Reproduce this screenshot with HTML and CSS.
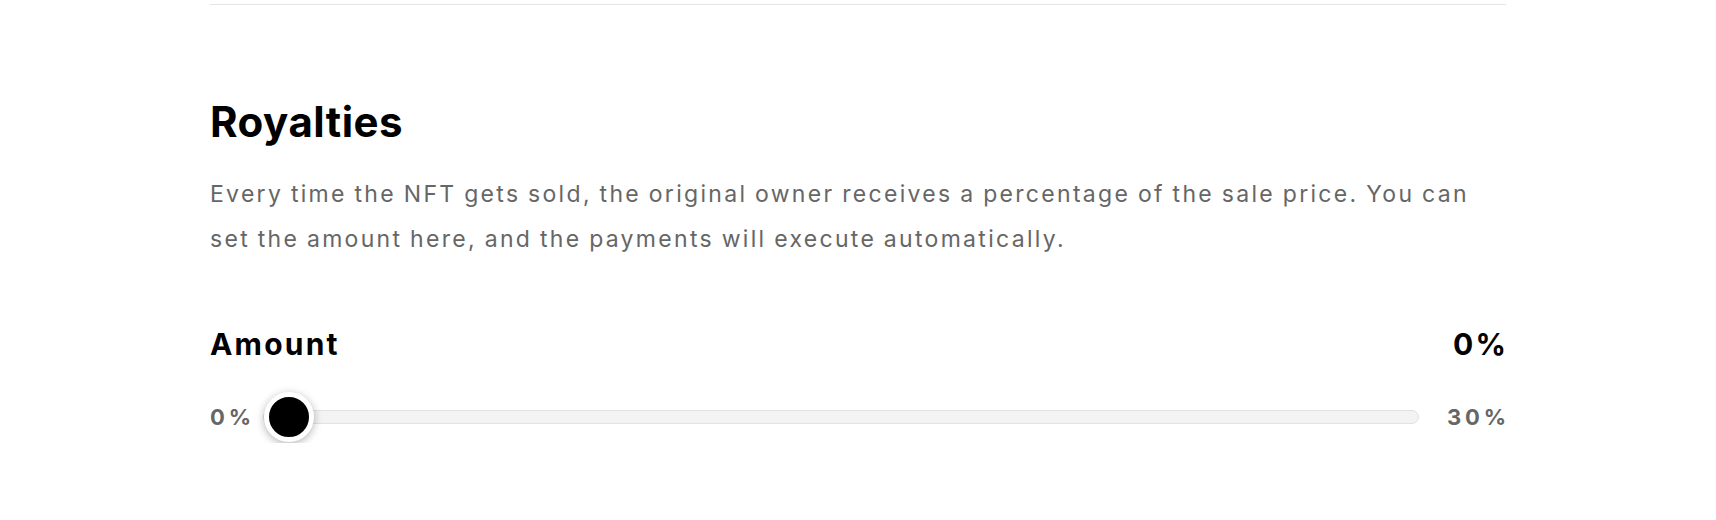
FILE: index.html
```html
<!DOCTYPE html>
<html>
<head>
  <title>Royalties</title>
  <link rel="stylesheet" href="styles.css">
</head>
<body>

  <div class="page">
    <div class="divider"></div>

    <section class="royalties">
      <h2>Royalties</h2>
      <p class="description">Every time the NFT gets sold, the original owner receives a percentage of the sale price. You can set the amount here, and the payments will execute automatically.</p>

      <div class="amount-head">
        <span class="amount-label">Amount</span>
        <span class="amount-value" id="amountValue">0%</span>
      </div>

      <div class="slider-row">
        <span class="range-label">0%</span>
        <input type="range" id="royaltySlider" min="0" max="30" value="0">
        <span class="range-label max">30%</span>
      </div>
    </section>
  </div>

  <script>
    // Keep the value on the right in step with the slider
    document.getElementById('royaltySlider').oninput = function() {
      document.getElementById('amountValue').textContent = this.value + '%';
    }
  </script>

</body>
</html>
```

FILE: styles.css
```css
* {
  box-sizing: border-box;
}

body {
  font-family: Inter, "Noto Sans", sans-serif;
  background: #fff;
  color: #000;
  margin: 0;
}

.page {
  max-width: 1296px;
  margin: 0 auto;
  padding-top: 4px;
}

.divider {
  border-top: 1px solid #e5e5e5;
}

.royalties {
  padding-top: 92px;
}

h2 {
  margin: 0 0 25px;
  font-size: 42px;
  line-height: 50px;
  font-weight: 700;
  letter-spacing: 0.5px;
}

.description {
  margin: 0 0 65px;
  font-size: 23px;
  line-height: 45px;
  letter-spacing: 2.3px;
  word-spacing: -1px;
  color: #666;
}

.amount-head {
  display: flex;
  justify-content: space-between;
  align-items: center;
  font-size: 30px;
  line-height: 34px;
  font-weight: 700;
  letter-spacing: 2.2px;
}

.amount-value {
  margin-right: -2.2px;
}

.slider-row {
  display: flex;
  align-items: center;
  margin-top: 30px;
  height: 52px;
}

.range-label {
  font-size: 22px;
  font-weight: 700;
  letter-spacing: 3.8px;
  color: #666;
}

.range-label.max {
  margin-left: 28px;
  margin-right: -3.8px;
}

input[type="range"] {
  -webkit-appearance: none;
  appearance: none;
  flex: 1;
  margin: 0 0 0 8px;
  height: 50px;
  background: transparent;
  cursor: pointer;
}

input[type="range"]::-webkit-slider-runnable-track {
  box-sizing: border-box;
  height: 14px;
  background: #f3f3f3;
  border: 1px solid #e2e2e2;
  border-radius: 7px;
}

input[type="range"]::-webkit-slider-thumb {
  -webkit-appearance: none;
  box-sizing: border-box;
  width: 50px;
  height: 50px;
  margin-top: -19px;
  border-radius: 50%;
  background: #000;
  border: 5px solid #fff;
  box-shadow: 0 2px 8px rgba(0,0,0,0.3);
}

input[type="range"]:focus {
  outline: none;
}
```
